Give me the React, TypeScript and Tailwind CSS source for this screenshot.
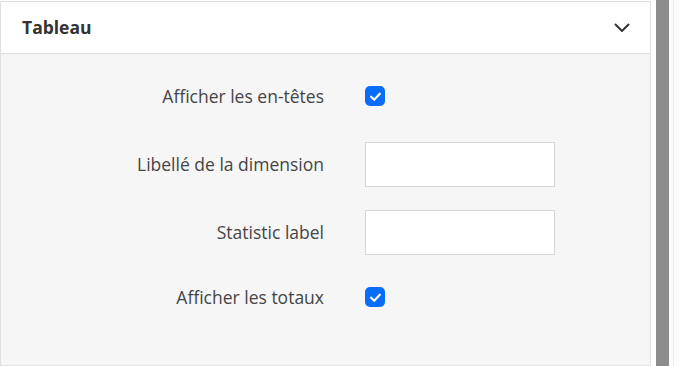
import React from 'react';

const Check: React.FC = () => (
  <span className="flex h-5 w-5 items-center justify-center rounded-[5px] bg-[#0a6df7]">
    <svg viewBox="0 0 12 12" className="h-[13px] w-[13px]" fill="none">
      <path d="M2 6.2 4.8 9 10 3.4" stroke="white" strokeWidth="2" strokeLinecap="round" strokeLinejoin="round" />
    </svg>
  </span>
);

const Label: React.FC<{ text: string }> = ({ text }) => (
  <div className="w-[323px] shrink-0 text-right text-[17.5px] text-[#454545]">{text}</div>
);

export default function App() {
  return (
    <div className="flex h-[366px] w-[679px] bg-white pt-[1px] font-['Open_Sans',sans-serif]">
      <div className="flex h-[365px] w-[651px] shrink-0 flex-col border border-[#e0e0e0]">
        <div className="flex h-[52px] shrink-0 items-center justify-between border-b border-[#dedede] bg-white pl-[21px] pr-[20px]">
          <span className="text-[17.5px] font-bold text-[#333]">Tableau</span>
          <svg viewBox="0 0 16 9" className="h-[9px] w-[16px]" fill="none">
            <path d="M1 1l7 7 7-7" stroke="#333" strokeWidth="2" />
          </svg>
        </div>
        <div className="flex flex-1 flex-col bg-[#f6f6f6] pt-[32px]">
          <div className="flex h-5 items-center gap-[41px]">
            <Label text="Afficher les en-têtes" />
            <Check />
          </div>
          <div className="mt-[36px] flex items-center gap-[41px]">
            <Label text="Libellé de la dimension" />
            <input className="h-[45px] w-[190px] border border-[#d6d6d6] bg-white outline-none" />
          </div>
          <div className="mt-[23px] flex items-center gap-[41px]">
            <Label text="Statistic label" />
            <input className="h-[45px] w-[190px] border border-[#d6d6d6] bg-white outline-none" />
          </div>
          <div className="mt-[32px] flex h-5 items-center gap-[41px]">
            <Label text="Afficher les totaux" />
            <Check />
          </div>
        </div>
      </div>
      <div className="w-[5px] shrink-0" />
      <div className="-mt-[1px] h-[366px] w-[13px] shrink-0 bg-[#8c8c8c]" />
      <div className="-mt-[1px] flex h-[366px] flex-1 bg-[#fbfbfb]">
        <div className="ml-[4px] w-[1px] bg-[#ececec]" />
      </div>
    </div>
  );
}
